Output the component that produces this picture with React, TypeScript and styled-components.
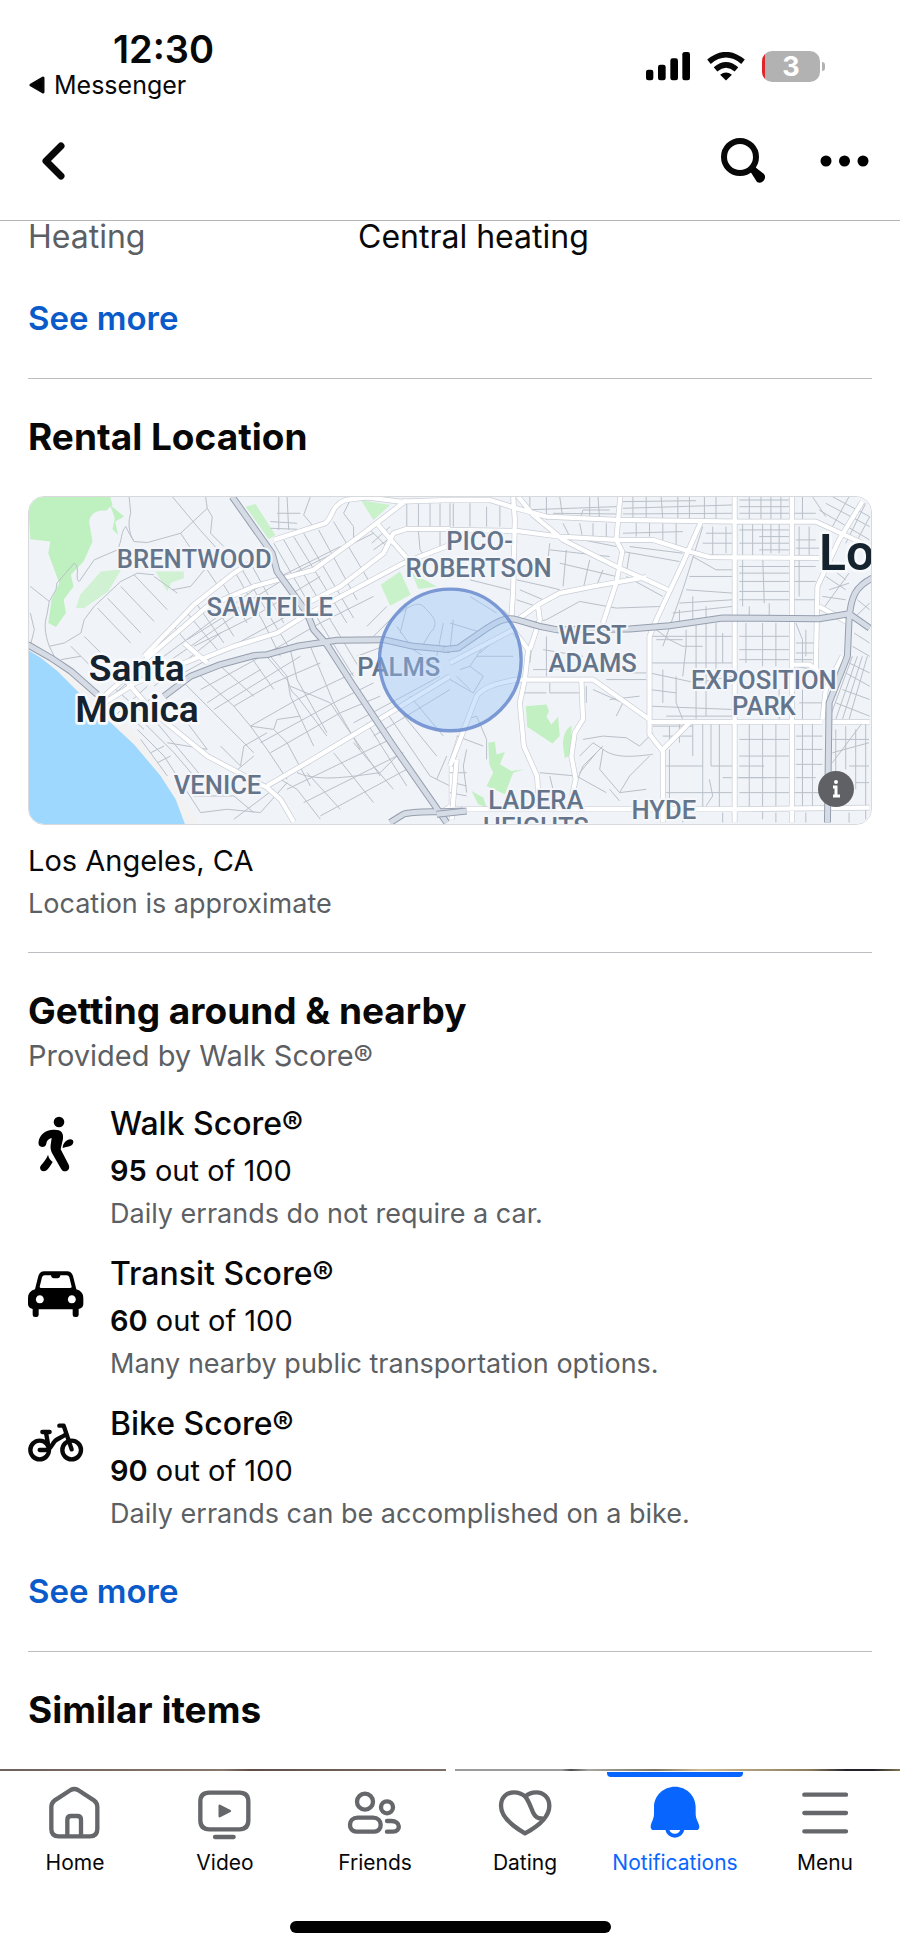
import React from "react";
import styled, { createGlobalStyle } from "styled-components";

const GlobalStyle = createGlobalStyle`
  *, *::before, *::after { box-sizing: border-box; }
  body {
    margin: 0;
    background: #fff;
    color: #080809;
    font-family: Inter, "Liberation Sans", sans-serif;
  }
  h2, h3, p, dl, dd, ul { margin: 0; padding: 0; }
  ul { list-style: none; }
  button { border: 0; padding: 0; background: none; font: inherit; color: inherit; cursor: pointer; }
  a { color: inherit; text-decoration: none; }
  svg { display: block; }
`;

const Screen = styled.div`
  display: flex;
  flex-direction: column;
  min-height: 100vh;
`;

/* ---------- Status bar ---------- */

const StatusBar = styled.div`
  display: flex;
  justify-content: space-between;
  align-items: flex-start;
  height: 102px;
  padding: 29px 75px 0 29px;
`;

const Clock = styled.div`
  padding-left: 84px;
  font-size: 38px;
  line-height: 40px;
  font-weight: 600;
`;

const BackToApp = styled.a`
  display: flex;
  align-items: center;
  gap: 9px;
  font-size: 25px;
  line-height: 32px;
`;

const StatusIcons = styled.div`
  display: flex;
  align-items: center;
  gap: 17px;
  padding-top: 22px;
`;

const Battery = styled.div`
  display: flex;
  align-items: center;
  gap: 2px;
`;

const BatteryBody = styled.div`
  width: 58px;
  height: 31px;
  border-radius: 10px;
  background: linear-gradient(90deg, #e0262b 3px, #b2b2b2 3px);
  color: #fff;
  font-size: 27px;
  line-height: 31px;
  font-weight: 700;
  text-align: center;
`;

const BatteryNub = styled.div`
  width: 3px;
  height: 9px;
  border-radius: 0 4px 4px 0;
  background: #b2b2b2;
`;

/* ---------- Navigation header ---------- */

const NavHeader = styled.header`
  display: flex;
  align-items: center;
  justify-content: space-between;
  height: 119px;
  padding: 0 31px 0 28px;
  border-bottom: 1px solid #b4b5b8;
`;

const NavActions = styled.div`
  display: flex;
  align-items: center;
  gap: 52px;
`;

const IconButton = styled.button`
  display: flex;
  align-items: center;
  justify-content: center;
`;

/* ---------- Content ---------- */

const Content = styled.main`
  flex: 1;
`;

const Section = styled.section<{ $top: number; $bottom: number }>`
  margin: 0 28px;
  padding: ${(p) => p.$top}px 0 ${(p) => p.$bottom}px;
  & + & { border-top: 1px solid #bcbdc0; }
`;

const Fact = styled.dl`
  display: grid;
  grid-template-columns: 330px 1fr;
  font-size: 32px;
  line-height: 32px;
`;

const FactName = styled.dt`
  color: #5c5f63;
`;

const SeeMore = styled.button<{ $gap: number }>`
  display: block;
  margin-top: ${(p) => p.$gap}px;
  color: #0a5bc9;
  font-size: 33px;
  line-height: 40px;
  font-weight: 600;
`;

const Heading = styled.h2`
  font-size: 37px;
  line-height: 46px;
  font-weight: 700;
`;

const Lead = styled.p<{ $muted?: boolean }>`
  font-size: 29px;
  line-height: 44px;
  color: ${(p) => (p.$muted ? "#5c5f63" : "#080809")};
`;

const Note = styled.p`
  font-size: 27px;
  line-height: 42px;
  color: #5c5f63;
`;

/* ---------- Map ---------- */

const MapFrame = styled.div`
  position: relative;
  margin: 36px 0 14px;
  border: 1px solid #d7d9dc;
  border-radius: 16px;
  overflow: hidden;
`;

const MapCanvas = styled.svg`
  width: 100%;
  height: auto;
  background: #f0f3f7;
  font-family: Roboto, sans-serif;
`;

const MapInfo = styled.button`
  position: absolute;
  right: 17px;
  bottom: 17px;
  width: 36px;
  height: 36px;
  border-radius: 50%;
  background: #5f6164;
`;

const coastGroup = "translate(-24 -21)";
const cityGroup = "translate(1266 -21)";

const coastStreets = [
  "M325 20 L330 70 C322 90 322 130 340 155 L380 158 L480 130 L560 55 L555 20 M455 20 L540 122 L620 210 M480 130 L520 190 M560 55 L575 80 L570 130 L610 170",
  "M28 290 L85 335 L78 375 C70 400 70 430 85 470 L100 500 M85 335 L105 300 L108 280 L160 220 C180 230 160 270 175 275 L220 210 L290 180 C305 150 300 125 315 110 L325 130 L340 155",
  "M85 470 L130 460 L180 430 L190 390 L220 350 L300 275 L350 250 L400 255 M340 255 L440 360 M300 290 L400 395 M260 325 L360 430 M230 355 L330 460 M190 440 L250 500 M150 470 L230 550",
  "M28 370 L40 420 L30 460 M120 510 L180 500 M400 260 L470 310 M455 300 L510 290 L560 230 M560 240 L590 285",
  "M760 160 L900 400 L1000 560 M790 150 L930 390 L1020 540 M820 140 L980 400 M850 130 L1000 385 M895 120 L1010 330 M940 95 L1050 280 M870 20 L850 75 L880 110",
  "M640 240 L730 400 L780 500 M665 240 L760 400 L810 480 M690 220 L790 400 M600 270 L680 400 M560 310 L640 440 M530 345 L610 460 M500 370 L590 480 M460 410 L540 510",
  "M470 560 L780 390 L1000 270 M500 450 L820 250 L1060 130 M430 500 L700 300 L960 170 M380 560 L640 380 M400 590 L600 430 M520 470 L700 380 L900 260",
  "M540 600 L760 480 L900 400 L1060 320 M560 640 L620 600 L720 540 M580 660 L840 500 M640 650 L760 580 L900 520 M690 710 L830 630 L1000 550 M720 760 L940 640 L1060 580 M750 790 L960 670 L1080 620",
  "M480 570 L580 670 L700 790 M530 550 L640 650 L690 710 L740 780 L800 870 M600 530 L700 620 M690 500 L760 600 M750 500 L800 560 L810 620 L880 770 M810 480 L830 570 L920 730 M870 470 L940 640 L1020 780",
  "M730 490 L790 560 C815 580 800 600 830 620 L920 740 M810 590 L930 640 L970 700 L1080 860 M690 710 L760 720 L770 690 L840 680 M760 720 L800 760 L870 890",
  "M780 870 L830 900 L900 990 M860 850 L960 960 M940 790 L1060 940 M1000 760 L1120 900 M800 900 L1110 750 M850 940 L1150 790 M900 980 L1160 840 M830 850 C900 880 1000 860 1080 850 L1130 800 M1040 700 L1160 890",
  "M350 720 L430 800 L540 970 M370 700 L460 790 L520 860 M400 690 L550 870 M360 750 L440 860 M390 790 L430 770 M410 820 L450 800 M440 760 L560 780 L500 700 M600 770 L660 830 L670 770 L740 730 M640 850 L700 800",
  "M260 620 L370 720 M285 600 L400 700 M310 580 L420 690 M240 650 L340 560 M270 690 L380 590 M300 700 L400 620 M540 970 L620 960 L720 970 M520 920 L640 920 L700 970 M720 970 L800 880 M640 990 L760 900",
  "M1040 410 L1100 350 M1060 440 L1120 380 M1090 470 L1010 500 M1000 700 L1260 560 M1060 740 L1290 600 M1120 640 L1250 800 M1170 620 L1270 740 M1100 670 L1230 860 L1290 890 M1280 800 L1250 870",
  "M775 20 L775 120 M800 20 L805 120 M750 95 L830 100 M770 70 L840 70 M750 115 L830 118 M990 30 L970 70 L1000 110 L1000 150 M1050 120 L1100 170 M1075 110 L1130 180 M1055 160 L1110 110 M1060 180 L1130 130",
  "M1160 40 V110 M1195 40 V110 M1230 40 V110 M1260 40 V110 M1195 125 L1200 180 L1215 200 L1210 260 M1260 120 V180 M1290 40 V110",
  "M1100 400 C1150 360 1190 330 1210 350 C1240 380 1260 400 1230 430 L1200 480 M1130 410 L1180 480 L1240 520 M1270 400 L1250 500 M1160 350 L1140 430 M1300 390 L1290 480",
];

const coastRoads = [
  "M370 500 L520 345 L640 250 L690 220",
  "M250 620 L420 470 L560 350 L700 290 L880 240 L1030 130 L1160 30",
  "M760 150 L915 100 C940 80 930 50 975 30 L1040 22 L1140 35 L1290 30",
  "M540 510 L640 470 L770 430 L850 380 L1150 220 L1290 165",
  "M820 360 L960 290 L1090 190 L1120 130 L1160 117 L1290 117",
  "M1070 100 L1130 170 L1170 215 M490 460 L560 520",
  "M250 640 L330 590 L400 670 L560 800 L720 885 L740 895 L780 930 L820 998",
  "M740 890 L860 820 L1060 700 L1290 560",
  "M1320 740 L1295 820 V950 L1270 965 M320 590 L540 500",
];

const coastFreeways = [
  "M635 20 L755 190 L770 245 L860 370 L880 420 L920 465 L1000 590 L1120 770 L1280 1000",
  "M430 620 L510 560 L600 525 L700 498 L740 495 L830 470 L950 452 L1090 450 L1180 470 L1290 480",
  "M20 465 L90 505 L150 545 L230 615",
  "M1110 1000 L1150 975 C1180 965 1230 970 1330 965",
];

const cityStreets = [
  "M10 40 V110 M60 40 V110 M110 50 V110 M150 40 V110 M240 60 V20 M290 90 V20 M340 90 L330 20 M390 90 L400 60 L480 60 M420 90 V20 M450 90 L445 20 M220 60 L500 50 M310 70 L500 72 M550 90 V20 M590 90 V20 M640 90 L635 20 M685 85 V20 M720 90 V20 M765 90 V20 M800 90 V20",
  "M520 55 L850 45 M520 72 L850 70 M520 35 L740 32 M870 30 H1020 M870 50 H1020 M870 70 H1100 M900 90 V20 M935 90 V20 M965 90 V20 M995 90 V20 M1060 90 V20 M1090 20 L1130 80",
  "M340 100 L360 140 M390 100 L400 150 L500 170 M430 100 V145 M470 100 V150 M520 130 L700 125 M560 95 V140 M600 95 V140 M640 100 V150 M680 100 V180 M540 170 L700 190 M520 185 L690 215",
  "M760 110 L700 300 L640 470 M790 110 V200 M830 110 V190 M770 130 H850 M760 160 H850 M730 200 L800 240 H850 M720 260 H850 M710 300 L850 310 M690 340 L850 330 M670 370 L850 350",
  "M880 100 V350 M910 100 V200 M940 100 V190 L945 340 M965 100 V190 M990 100 V190 M870 120 H1020 M930 140 H1020 M870 160 H1020 M930 180 H1020 M870 230 H1100 M870 250 H1020 M870 275 H1100 M870 305 H1020 M870 330 H1100 M1050 110 V320 M1080 110 V200 M1040 150 H1100 M1040 175 H1110",
  "M210 300 L280 330 M200 330 L260 350 M200 270 L290 290 L330 300 M60 270 L180 300 M350 180 L340 290 M300 160 L290 250 M420 210 L400 300 M460 240 L440 290 M240 400 L290 390 L390 335 L500 355 L640 350 M330 220 L500 260 M540 190 L530 250 M300 180 L480 200 M530 260 L640 320",
  "M620 420 L660 450 L700 470 L760 470 M620 450 H700 M710 420 V470 L700 560 M770 350 V680 M740 400 V690 M850 440 H600 M690 360 V400 M730 320 V400 M860 520 H600 M600 550 L740 580 L850 560 M600 600 L680 610 M680 560 V640 L700 690 M600 650 L850 660 M640 540 V640 M800 400 V550 M820 430 V520 M890 400 V520 M940 400 V530 M980 400 V530 M870 440 H1020 M870 480 H1020 M870 510 H1090 M900 350 V380 M960 340 V380",
  "M1040 400 L1060 450 V520 M1040 460 H1100 M1040 490 H1100 M1070 420 V500 M1040 530 L1090 540 M990 600 V690 M960 680 V640 M1060 600 V690 M870 620 H850 M650 680 H850 M1050 640 H1120",
  "M250 430 L240 520 M290 440 V560 M280 480 L400 500 M300 580 V610 H400 M290 610 H220 M430 600 L520 640 L500 680 M480 630 L570 620 M410 590 V640 M470 570 H590 M530 550 H590 M250 540 H390",
  "M400 750 L460 740 L530 745 L570 770 M390 800 L430 760 L460 780 L450 840 L510 910 L590 900 M460 780 C500 810 560 800 610 795 M390 850 L440 790 M380 880 L400 830 L460 770 M510 910 L540 860 L600 800 M570 770 L610 730 M270 850 L380 860 L470 910 M300 860 L310 900 M480 900 L510 935",
  "M610 710 L730 710 M640 740 H730 M660 710 V760 M690 700 V760 M660 780 V950 M730 700 V800 M760 700 V960 M785 700 V830 H850 M810 700 V960 M650 830 H760 M820 865 H950 M780 870 L790 920 L770 950 M870 750 H1020 M870 800 H1020 M870 830 H945 M870 865 H1020 M870 910 H1120 M650 910 H850 M900 700 V960 M940 700 V990 M980 700 V960 M1060 700 V960 M1090 700 V960 M1040 740 H1120 M1040 780 H1120 M1040 825 H1120 M1040 865 H1100 M700 970 V1000 M820 970 V1000 M980 970 V1000 M1070 970 V1000",
  "M1160 720 V850 M1190 710 V840 M1220 720 V900 M1250 700 V990 M1150 750 H1260 M1150 790 L1260 760 M1200 830 H1260 M1220 880 H1260 M1150 820 L1240 700 M1150 960 H1260 M1200 970 V1000",
  "M1210 500 L1140 690 M1225 500 L1160 690 M1240 500 L1180 690 M1255 500 L1200 690 M1215 430 L1262 460 M1210 470 L1262 500 M1200 520 L1262 550 M1190 550 L1262 590 M1180 600 L1262 630 M1160 640 L1262 680 M1220 380 L1262 340 M1225 330 L1262 360",
  "M1110 60 L1262 150 M1130 40 L1262 110 M1150 20 L1262 80 M1200 20 L1150 110 M1250 40 L1190 160 M1262 80 L1210 180 M1140 300 L1200 280 M1120 320 L1190 330 M1140 230 L1190 270 M1130 260 L1190 300 M1120 360 L1200 250",
  "M0 850 H50 M10 880 L50 890 M50 690 L80 680 L110 750 L110 810 M50 780 L40 830 L50 910 M20 740 L100 770 M0 910 L50 920 M160 360 L180 380 M60 320 L140 370 M0 400 L100 430",
  "M30 540 L60 530 L100 560 L70 610 L0 570 M100 470 L60 530 M80 500 L190 500 M150 440 L90 490 M20 560 L60 600",
];

const cityRoads = [
  "M0 30 L120 30 L200 55 L290 80 L500 90 L870 95 L1100 95 L1262 170",
  "M0 120 L200 123 L330 140 L500 150 L610 150 L720 185 L780 202 L1110 204",
  "M205 20 L250 75 L340 150 L510 235 L590 270 L655 300",
  "M190 20 L195 90 L190 300 L185 380 M512 20 L500 150 L518 185 L500 280 L460 400",
  "M210 385 L265 345 L330 310 L430 290 L590 262",
  "M755 95 L700 220 L625 380 L600 440 L600 735 L640 785 V1000",
  "M856 20 V1000 M1028 20 V1000 M1240 35 L1170 150 L1105 290 L1100 540 M1110 350 L1200 400",
  "M600 697 H1120 M1150 697 H1262 M640 780 L720 700",
  "M0 520 L190 420 L235 480 L225 570 L210 640 L222 770 L262 860 L268 960 M265 350 L270 390 L240 480",
  "M0 830 L80 620 C100 590 150 580 200 570 L430 570 L600 690",
  "M395 570 L400 690 L375 730 L365 800 L378 870 L365 930 M0 960 H850 L1262 955 M20 810 L5 990",
  "M1030 525 L1080 525 L1110 545 M1180 500 L1130 600 L1120 690",
];

const cityFreeways = [
  "M-20 480 L25 475 L90 430 C140 395 170 380 200 390 L270 410 L320 420 L540 418 L660 408 L820 385 L1110 387 L1200 372 L1262 415",
  "M1270 265 C1220 290 1205 320 1200 390 L1195 500 L1140 640 L1135 1000",
  "M-40 975 L50 965",
];

type Layer = { at: string; streets: string[]; roads: string[]; freeways: string[] };

const layers: Layer[] = [
  { at: coastGroup, streets: coastStreets, roads: coastRoads, freeways: coastFreeways },
  { at: cityGroup, streets: cityStreets, roads: cityRoads, freeways: cityFreeways },
];

const strokes = (paths: string[], color: string, width: number) => (
  <path d={paths.join(" ")} fill="none" stroke={color} strokeWidth={width} strokeLinejoin="round" />
);

const placeNames: { text: string; x: number; y: number }[] = [
  { text: "BRENTWOOD", x: 497, y: 214 },
  { text: "SAWTELLE", x: 724, y: 359 },
  { text: "VENICE", x: 567, y: 893 },
  { text: "PICO-", x: 1355, y: 160 },
  { text: "ROBERTSON", x: 1352, y: 242 },
  { text: "WEST", x: 1695, y: 443 },
  { text: "ADAMS", x: 1695, y: 525 },
  { text: "EXPOSITION", x: 2210, y: 576 },
  { text: "PARK", x: 2210, y: 657 },
  { text: "LADERA", x: 1524, y: 937 },
  { text: "HEIGHTS", x: 1524, y: 1018 },
  { text: "HYDE", x: 1909, y: 969 },
  { text: "PALMS", x: 1112, y: 539 },
];

function RentalMap() {
  return (
    <MapCanvas viewBox="0 0 2532 984" role="img" aria-label="Map of the area around Palms, Los Angeles">
      <g transform={coastGroup}>
        <path d="M20 440 L100 500 L170 560 L260 650 L350 740 L430 840 L490 930 L540 1010 H20Z" fill="#f3f2f3" />
        <path d="M20 480 L60 505 L110 545 L170 605 L220 660 L270 700 L340 765 L420 860 L465 930 L495 1010 H20Z" fill="#9fd8fe" />
        <path d="M20 20 H268 L275 45 L255 62 C225 58 205 75 205 98 L215 155 L188 215 L150 255 L158 290 L128 330 L135 370 L105 412 L82 400 L92 330 L115 280 L82 190 L88 155 L28 148Z" fill="#bff0bf" />
        <path d="M268 45 L310 80 L283 95 L292 135 L275 118 L282 85Z" fill="#bff0bf" />
        <path d="M165 355 L178 315 L240 245 L302 238 L262 305 L190 355Z M405 245 H490 V265 L452 278 L440 305Z" fill="#d0f2d2" />
        <path d="M675 50 L705 42 L765 135 L745 148Z M1022 30 L1110 45 L1060 90Z" fill="#c9f1ca" />
        <path d="M1082 285 L1140 245 L1172 315 L1110 348Z M1175 248 L1250 290 L1195 298Z" fill="#c9f1ca" />
      </g>
      <g transform={cityGroup}>
        <path d="M228 650 L290 645 L298 665 L290 682 L305 705 L325 682 L330 740 L308 762 L232 712Z M340 770 C338 740 350 715 366 708 L362 800 L345 805Z" fill="#c3f0c3" />
        <path d="M115 760 L135 757 L140 795 L165 788 L150 825 L185 845 L225 840 L190 850 L165 915 L110 890 L130 850 L118 825Z M65 905 L100 925 L110 955 L85 945Z" fill="#c3f0c3" />
      </g>
      {layers.map((l) => (
        <g key={l.at} transform={l.at}>
          {strokes(l.streets, "#bac0c9", 3)}
          {strokes(l.roads, "#c8cdd5", 17)}
          {strokes(l.roads, "#ffffff", 13)}
        </g>
      ))}
      {layers.map((l) => (
        <g key={l.at} transform={l.at}>
          {strokes(l.freeways, "#969faf", 21)}
          {strokes(l.freeways, "#d6dce6", 15)}
        </g>
      ))}
      <g fill="#64748b" fontSize="77" fontWeight="500" textAnchor="middle" stroke="#f4f6f9" strokeWidth="12" strokeLinejoin="round" paintOrder="stroke">
        {placeNames.map((p) => (
          <text key={p.text} x={p.x} y={p.y}>{p.text}</text>
        ))}
      </g>
      <g fill="#15232e" fontSize="112" fontWeight="600" textAnchor="middle" stroke="#f7f9fb" strokeWidth="16" strokeLinejoin="round" paintOrder="stroke">
        <text x="324" y="554">Santa</text>
        <text x="325" y="676">Monica</text>
        <text x="2376" y="221" fontSize="150" textAnchor="start">Lo</text>
      </g>
      <circle cx="1267" cy="490" r="213" fill="#98c3f8" fillOpacity="0.42" stroke="#6f8fcf" strokeOpacity="0.9" strokeWidth="10" />
    </MapCanvas>
  );
}

/* ---------- Scores ---------- */

const ScoreList = styled.ul`
  display: flex;
  flex-direction: column;
  gap: 14px;
  margin-top: 21px;
`;

const ScoreItem = styled.li`
  display: grid;
  grid-template-columns: 56px 1fr;
  gap: 26px;
`;

const ScoreIcon = styled.div`
  padding-top: 17px;
`;

const ScoreName = styled.h3`
  font-size: 32px;
  line-height: 50px;
  font-weight: 500;
`;

const ScoreValue = styled.p`
  font-size: 29px;
  line-height: 44px;
  strong { font-weight: 600; }
`;

const WalkIcon = () => (
  <svg width="56" height="56" viewBox="83 81 168 168" aria-hidden="true">
    <circle cx="176" cy="99" r="16" />
    <path d="M126 174 C118 174 113 168 115 157 C118 138 134 122 160 122 C182 121 190 131 188 149 L181 181 L204 225 C212 240 200 248 194 247 C188 247 185 244 182 239 L155 192 C151 184 150 176 151 168 L154 147 C145 149 139 155 138 164 C137 170 132 174 126 174Z" />
    <path d="M187 177 C188 161 199 152 210 151 C222 151 221 164 214 169 C206 174 197 173 187 177Z" />
    <path d="M143 197 C145 207 150 213 157 219 C152 227 147 235 142 241 C135 250 120 248 119 236 C119 229 127 225 131 218 C136 211 140 206 143 197Z" />
  </svg>
);

const CarIcon = () => (
  <svg width="56" height="56" viewBox="82 530 168 168" aria-hidden="true">
    <path
      fillRule="evenodd"
      d="M103 600 L113 560 Q117 546 131 546 H199 Q213 546 217 560 L227 600 Q248 606 248 626 V644 Q248 656 234 659 V676 Q234 683 227 683 H223 Q216 683 216 676 V660 H114 V676 Q114 683 107 683 H103 Q96 683 96 676 V659 Q82 656 82 644 V626 Q82 606 103 600Z M132 558 Q126 558 124 564 L117 592 Q117 596 122 596 H208 Q213 596 213 592 L206 564 Q204 558 198 558 H179 Q178 567 170 567 H160 Q152 567 151 558Z M117 618 a12 12 0 1 0 1 0Z M213 618 a12 12 0 1 0 1 0Z"
    />
  </svg>
);

const BikeIcon = () => (
  <svg width="56" height="56" viewBox="82 980 168 168" fill="none" stroke="#080809" strokeWidth="13" strokeLinecap="round" strokeLinejoin="round" aria-hidden="true">
    <circle cx="117" cy="1082" r="28" />
    <circle cx="213" cy="1082" r="28" />
    <path d="M125 1028 H147 M136 1030 L142 1064 M117 1082 H134 C152 1082 152 1066 163 1055 C172 1046 184 1044 194 1036 M176 1009 H189 L213 1080" />
  </svg>
);

const scores = [
  { name: "Walk Score®", value: 95, note: "Daily errands do not require a car.", icon: <WalkIcon /> },
  { name: "Transit Score®", value: 60, note: "Many nearby public transportation options.", icon: <CarIcon /> },
  { name: "Bike Score®", value: 90, note: "Daily errands can be accomplished on a bike.", icon: <BikeIcon /> },
];

/* ---------- Similar items ---------- */

const PhotoStrip = styled.div`
  display: grid;
  grid-template-columns: 1fr 1fr;
  gap: 9px;
  height: 2px;
`;

const Photo = styled.div<{ $tone: string }>`
  background: ${(p) => p.$tone};
`;

const photoTones = [
  "linear-gradient(90deg, #6f625b, #86776d 50%, #5f4f48 56%, #7d6f67)",
  "linear-gradient(90deg, #9a9d99 0 24%, #4c4f4d 26%, #a9a69e 30%, #7d7466 45%, #cdbb93 55%, #8a7c5a 80%, #25222c 88% 94%, #86764f)",
];

/* ---------- Tab bar ---------- */

const TabBar = styled.nav`
  display: grid;
  grid-template-columns: repeat(6, 1fr);
`;

const Tab = styled.a<{ $active?: boolean }>`
  position: relative;
  display: flex;
  flex-direction: column;
  align-items: center;
  gap: 8px;
  padding-top: 13px;
  font-size: 21px;
  line-height: 28px;
  color: ${(p) => (p.$active ? "#0866ff" : "#080809")};
`;

const ActiveMark = styled.span`
  position: absolute;
  top: 0;
  width: 136px;
  height: 5px;
  border-radius: 0 0 4px 4px;
  background: #0866ff;
`;

const HomeIndicator = styled.div`
  width: 321px;
  height: 12px;
  margin: 44px auto 18px;
  border-radius: 6px;
  background: #000;
`;

const tabStroke = {
  width: 56,
  height: 56,
  fill: "none",
  stroke: "#65676b",
  strokeWidth: 13,
  strokeLinecap: "round" as const,
  strokeLinejoin: "round" as const,
  "aria-hidden": true,
};

const tabs = [
  {
    label: "Home",
    icon: (
      <svg {...tabStroke} viewBox="138 676 168 168">
        <path d="M209 691 Q220 685 231 691 L280 723 Q289 730 289 741 V808 Q289 830 267 830 H173 Q151 830 151 808 V741 Q151 730 160 723Z M199 828 V780 Q199 769 210 769 H229 Q240 769 240 780 V828" />
      </svg>
    ),
  },
  {
    label: "Video",
    icon: (
      <svg {...tabStroke} viewBox="589 676 168 168">
        <path d="M626 699 H716 Q743 699 743 726 V782 Q743 809 716 809 H626 Q599 809 599 782 V726 Q599 699 626 699Z M643 832 H699" />
        <path d="M657 738 L688 754 L657 770Z" fill="#65676b" strokeWidth="7" />
      </svg>
    ),
  },
  {
    label: "Friends",
    icon: (
      <svg {...tabStroke} viewBox="1040 676 168 168">
        <circle cx="1094" cy="726" r="24" />
        <circle cx="1160" cy="743" r="18" />
        <path d="M1072 774 H1118 C1148 774 1148 816 1122 816 H1068 C1042 816 1042 774 1072 774Z M1160 784 H1173 C1202 784 1202 816 1178 816 H1160" />
      </svg>
    ),
  },
  {
    label: "Dating",
    icon: (
      <svg {...tabStroke} viewBox="139 136 168 168">
        <path d="M224 171 C214 162 203 158 190 158 C167 158 151 174 151 198 C151 232 190 262 223 281 C262 260 296 230 296 198 C296 174 279 158 257 158 C244 158 232 162 224 171 C237 188 241 206 248 220 C254 232 262 237 274 236" />
      </svg>
    ),
  },
  {
    label: "Notifications",
    active: true,
    icon: (
      <svg width="56" height="56" viewBox="591 136 168 168" aria-hidden="true">
        <path d="M652 270 A23 23 0 0 0 697 270" fill="none" stroke="#0866ff" strokeWidth="12" />
        <path fill="#0866ff" d="M675 141 C640 141 612 168 612 202 V222 C612 239 603 247 602 261 Q602 271 612 271 H738 Q748 271 748 261 C746 247 737 239 737 222 V202 C737 168 709 141 675 141Z" />
      </svg>
    ),
  },
  {
    label: "Menu",
    icon: (
      <svg {...tabStroke} viewBox="1041 136 168 168">
        <path d="M1063 165 H1188 M1063 220 H1188 M1063 275 H1188" />
      </svg>
    ),
  },
];

export default function App() {
  return (
    <Screen>
      <GlobalStyle />
      <StatusBar>
        <div>
          <Clock>12:30</Clock>
          <BackToApp href="#messenger">
            <svg width="16" height="18" viewBox="0 0 16 18" aria-hidden="true">
              <path d="M14 2 V16 L2 9Z" stroke="#080809" strokeWidth="3" strokeLinejoin="round" />
            </svg>
            Messenger
          </BackToApp>
        </div>
        <StatusIcons>
          <svg width="44" height="29" viewBox="0 0 132 87" aria-label="Signal">
            <rect x="0" y="53" width="22" height="32" rx="7" />
            <rect x="36" y="38" width="23" height="47" rx="7" />
            <rect x="73" y="19" width="23" height="66" rx="7" />
            <rect x="109" y="0" width="23" height="85" rx="7" />
          </svg>
          <svg width="38" height="29" viewBox="771 158 116 87" aria-label="Wi-Fi">
            <g fill="none" stroke="#080809" strokeWidth="17">
              <path d="M777 187 Q829 144 881 187" />
              <path d="M797 210 Q829 183 861 210" />
            </g>
            <path d="M811 227 Q829 212 847 227 L829 244Z" />
          </svg>
          <Battery>
            <BatteryBody>3</BatteryBody>
            <BatteryNub />
          </Battery>
        </StatusIcons>
      </StatusBar>

      <NavHeader>
        <IconButton aria-label="Back">
          <svg width="48" height="48" viewBox="0 0 48 48" fill="none" stroke="#080809" strokeWidth="7" strokeLinecap="round" strokeLinejoin="round" aria-hidden="true">
            <path d="M33 9 L18 24 L33 39" />
          </svg>
        </IconButton>
        <NavActions>
          <IconButton aria-label="Search">
            <svg width="48" height="48" viewBox="0 0 48 48" aria-hidden="true">
              <circle cx="20" cy="20" r="16" fill="none" stroke="#080809" strokeWidth="6" />
              <path d="M30 34 L35 30 L44 37 A5.5 5.5 0 0 1 37 45Z" />
            </svg>
          </IconButton>
          <IconButton aria-label="More options">
            <svg width="49" height="12" viewBox="0 0 49 12" aria-hidden="true">
              <circle cx="6" cy="6" r="5.5" />
              <circle cx="24.5" cy="6" r="5.5" />
              <circle cx="43" cy="6" r="5.5" />
            </svg>
          </IconButton>
        </NavActions>
      </NavHeader>

      <Content>
        <Section $top={0} $bottom={40}>
          <Fact>
            <FactName>Heating</FactName>
            <dd>Central heating</dd>
          </Fact>
          <SeeMore $gap={45}>See more</SeeMore>
        </Section>

        <Section $top={35} $bottom={27}>
          <Heading>Rental Location</Heading>
          <MapFrame>
            <RentalMap />
            <MapInfo aria-label="Map information">
              <svg width="36" height="36" viewBox="0 0 36 36" fill="none" stroke="#fff" strokeWidth="3" aria-hidden="true">
                <path d="M15 16 H18 V25 M15 25 H22" />
                <circle cx="18" cy="11" r="2" fill="#fff" stroke="none" />
              </svg>
            </MapInfo>
          </MapFrame>
          <Lead>Los Angeles, CA</Lead>
          <Note>Location is approximate</Note>
        </Section>

        <Section $top={35} $bottom={40}>
          <Heading>Getting around &amp; nearby</Heading>
          <Lead $muted>Provided by Walk Score®</Lead>
          <ScoreList>
            {scores.map((s) => (
              <ScoreItem key={s.name}>
                <ScoreIcon>{s.icon}</ScoreIcon>
                <div>
                  <ScoreName>{s.name}</ScoreName>
                  <ScoreValue>
                    <strong>{s.value}</strong> out of 100
                  </ScoreValue>
                  <Note>{s.note}</Note>
                </div>
              </ScoreItem>
            ))}
          </ScoreList>
          <SeeMore $gap={36}>See more</SeeMore>
        </Section>

        <Section $top={35} $bottom={36}>
          <Heading>Similar items</Heading>
        </Section>
        <PhotoStrip>
          {photoTones.map((tone) => (
            <Photo key={tone} $tone={tone} />
          ))}
        </PhotoStrip>
      </Content>

      <footer>
        <TabBar>
          {tabs.map((t) => (
            <Tab key={t.label} href={`#${t.label.toLowerCase()}`} $active={t.active} aria-current={t.active ? "page" : undefined}>
              {t.active && <ActiveMark />}
              {t.icon}
              {t.label}
            </Tab>
          ))}
        </TabBar>
        <HomeIndicator />
      </footer>
    </Screen>
  );
}
